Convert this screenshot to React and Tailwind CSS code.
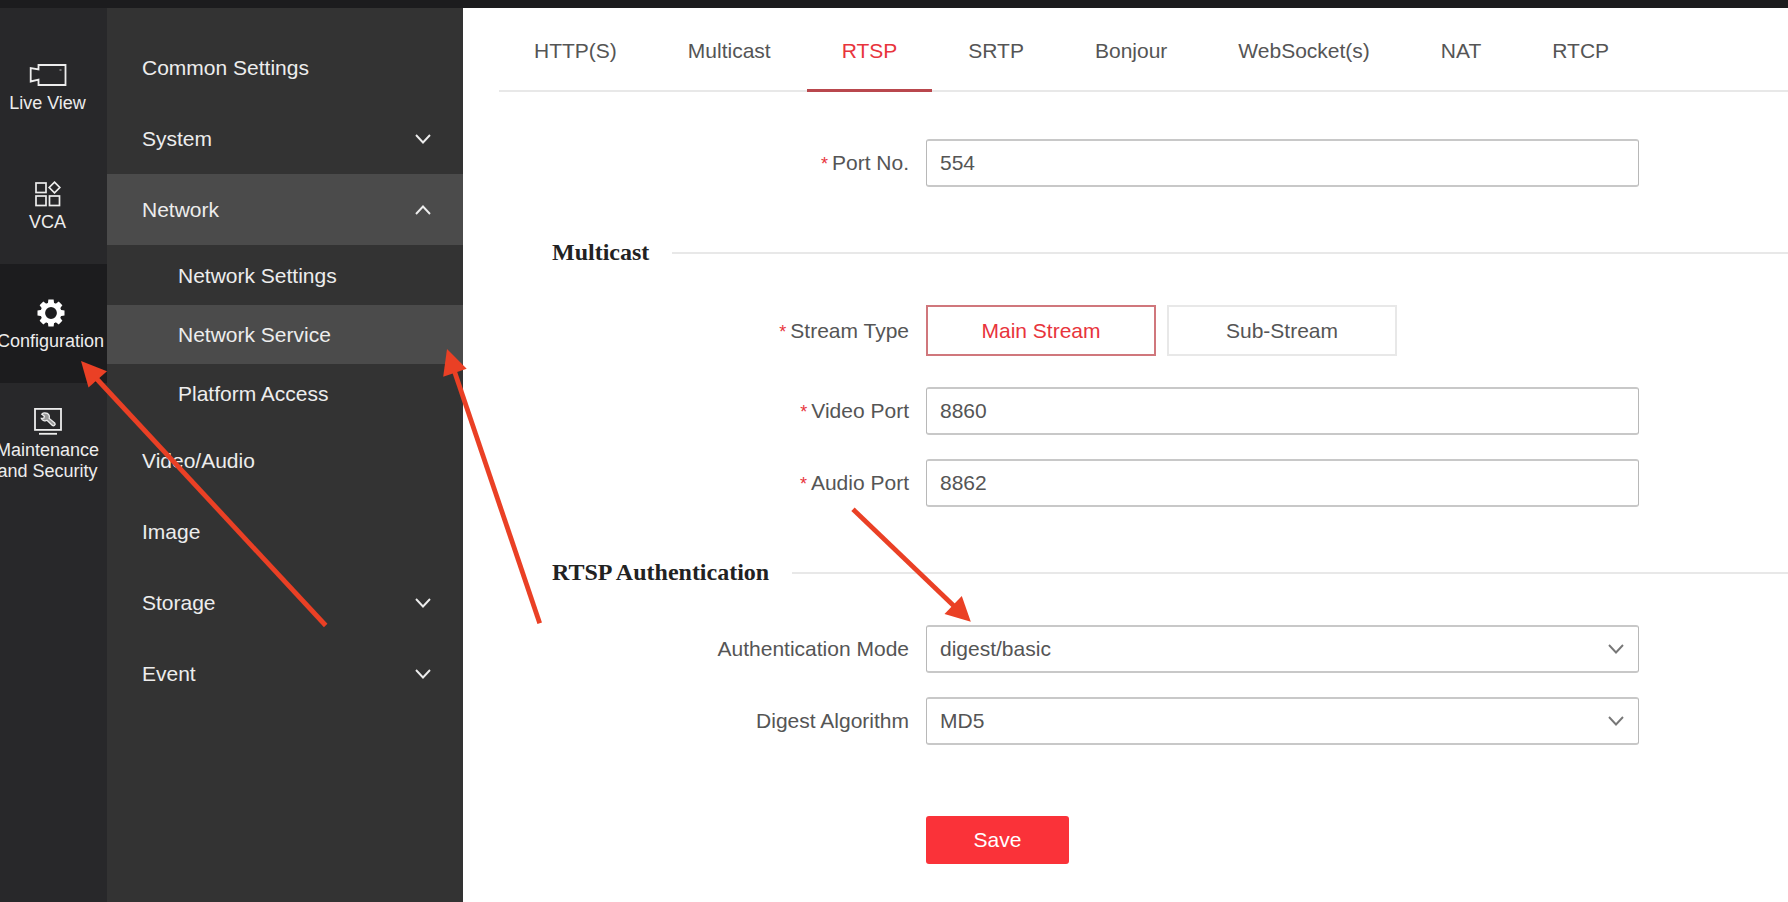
import { useState } from "react";

function CameraIcon() {
  return (
    <svg width="38" height="28" viewBox="0 0 38 28" fill="none" stroke="#ededed" strokeWidth="1.8" aria-hidden="true">
      <path d="M9 9V4.500H36V24.500H9V19.200L1.200 21V7.500L9 9Z" transform="translate(0.500 -0.500)" />
      <path d="M30.500 9h2" stroke="#a8a8a8" strokeWidth="1.2" />
    </svg>
  );
}

function VcaIcon() {
  return (
    <svg width="28" height="28" viewBox="0 0 28 28" fill="none" stroke="#ededed" strokeWidth="1.7" aria-hidden="true">
      <rect x="2" y="3" width="10" height="9.5" />
      <path d="M20.500 2.200l5.300 5.300-5.300 5.300L15.200 7.500Z" />
      <rect x="2" y="16" width="10" height="9.5" />
      <rect x="15.500" y="16" width="10" height="9.5" />
    </svg>
  );
}

function GearIcon() {
  return (
    <svg width="28" height="28" viewBox="0 0 28 28" aria-hidden="true">
      <circle cx="14" cy="14" r="8.200" fill="none" stroke="#fff" strokeWidth="4.600" />
      <g fill="#fff">
        {[0, 45, 90, 135, 180, 225, 270, 315].map((a) => (
          <path key={a} d="M10.800 5L11.400 0.500H16.600L17.200 5Z" transform={`rotate(${a} 14 14)`} />
        ))}
      </g>
    </svg>
  );
}

function MaintenanceIcon() {
  return (
    <svg width="28" height="28" viewBox="0 0 28 28" fill="none" stroke="#ededed" strokeWidth="1.800" aria-hidden="true">
      <rect x="1" y="0.900" width="26" height="21" />
      <path d="M5 25.800h18" />
      <path
        d="M11.500 5a4 4 0 0 0-3.700 1.200l2.600 2-.6 2-2.400.2a4 4 0 0 0 5.600 1.900l5.200 5a1.700 1.700 0 0 0 2.500-2.300l-5.500-4.600a4 4 0 0 0-3.700-5.400Z"
        fill="#9a9a9a"
        strokeWidth="1.300"
      />
    </svg>
  );
}

function Chevron({ up = false, className = "" }) {
  return (
    <svg
      className={className}
      width="18"
      height="12"
      viewBox="0 0 18 12"
      fill="none"
      stroke="currentColor"
      strokeWidth="1.900"
      aria-hidden="true"
    >
      <path d={up ? "M2 10l7-7.500 7 7.500" : "M2 2l7 7.500L16 2"} />
    </svg>
  );
}

const railItems = [
  { label: "Live View", Icon: CameraIcon },
  { label: "VCA", Icon: VcaIcon },
  { label: "Configuration", Icon: GearIcon, active: true },
  { label: "Maintenance and Security", Icon: MaintenanceIcon },
];

const menu = [
  { label: "Common Settings" },
  { label: "System", expandable: true },
  {
    label: "Network",
    expandable: true,
    open: true,
    children: ["Network Settings", "Network Service", "Platform Access"],
  },
  { label: "Video/Audio" },
  { label: "Image" },
  { label: "Storage", expandable: true },
  { label: "Event", expandable: true },
];

const tabs = ["HTTP(S)", "Multicast", "RTSP", "SRTP", "Bonjour", "WebSocket(s)", "NAT", "RTCP"];

function Rail() {
  return (
    <nav className="w-[107px] shrink-0 overflow-hidden bg-[#28282a] pt-[18px]" aria-label="Main">
      {railItems.map(({ label, Icon, active }) => (
        <a
          key={label}
          href="#"
          className={`flex h-[119px] flex-col items-center justify-center gap-1 pt-1 text-center text-[18px] leading-[21px] text-[#ededed] ${
            active ? "bg-[#1c1c1e] pr-1.5" : "pr-3"
          }`}
        >
          <Icon />
          <span className="w-[110px] shrink-0">{label}</span>
        </a>
      ))}
    </nav>
  );
}

function Sidebar() {
  return (
    <nav className="w-[356px] shrink-0 bg-[#333333] pt-6 text-[21px] text-[#ededed]" aria-label="Configuration">
      <ul>
        {menu.map((item) => (
          <li key={item.label}>
            <button
              type="button"
              aria-expanded={item.expandable ? Boolean(item.open) : undefined}
              className={`flex h-[71px] w-full items-center justify-between pr-[31px] pl-[35px] text-left ${
                item.open ? "bg-[#4b4b4b]" : ""
              }`}
            >
              {item.label}
              {item.expandable && <Chevron up={item.open} />}
            </button>
            {item.children && (
              <ul className="pt-px pb-0.5">
                {item.children.map((child) => (
                  <li key={child}>
                    <a
                      href="#"
                      className={`flex h-[59px] items-center pl-[71px] ${
                        child === "Network Service" ? "bg-[#4b4b4b]" : ""
                      }`}
                    >
                      {child}
                    </a>
                  </li>
                ))}
              </ul>
            )}
          </li>
        ))}
      </ul>
    </nav>
  );
}

const labelClass = "w-[410px] shrink-0 text-right";
const controlClass =
  "h-12 w-full rounded-[3px] border-x border-y-2 border-x-[#b8b8b8] border-y-[#c8c8c8] bg-white px-[13px] text-[#555555] outline-none";

function Required() {
  return <span className="mr-1 text-[18px] text-[#e8343c]">*</span>;
}

function TextRow({ id, label, value }) {
  return (
    <div className="flex items-center gap-[17px]">
      <label htmlFor={id} className={labelClass}>
        <Required />
        {label}
      </label>
      <div className="max-w-[713px] flex-1">
        <input id={id} type="text" defaultValue={value} className={controlClass} />
      </div>
    </div>
  );
}

function SelectRow({ id, label, options }) {
  return (
    <div className="flex items-center gap-[17px]">
      <label htmlFor={id} className={labelClass}>
        {label}
      </label>
      <div className="relative max-w-[713px] flex-1">
        <select id={id} className={`${controlClass} appearance-none`}>
          {options.map((o) => (
            <option key={o}>{o}</option>
          ))}
        </select>
        <Chevron className="pointer-events-none absolute top-[18px] right-[14px] text-[#777777]" />
      </div>
    </div>
  );
}

function SectionHeading({ children }) {
  return (
    <div className="mt-[50px] mb-9 flex h-8 items-center gap-[23px] pl-[53px]">
      <h2 className="pb-[3px] font-['Liberation_Serif',serif] text-[24px] leading-7 font-bold text-[#222222]">
        {children}
      </h2>
      <div className="h-0.5 flex-1 bg-[#e8e8e8]" />
    </div>
  );
}

function StreamType() {
  const [stream, setStream] = useState("Main Stream");
  return (
    <div className="mb-[31px] flex items-center gap-[17px]" role="group" aria-labelledby="stream-type">
      <span id="stream-type" className={labelClass}>
        <Required />
        Stream Type
      </span>
      <div className="flex gap-[11px]">
        {["Main Stream", "Sub-Stream"].map((s) => (
          <button
            key={s}
            type="button"
            aria-pressed={s === stream}
            onClick={() => setStream(s)}
            className={`h-[51px] w-[230px] border-2 ${
              s === stream ? "border-[#d0777c] text-[#e8343c]" : "border-[#e8e8e8]"
            }`}
          >
            {s}
          </button>
        ))}
      </div>
    </div>
  );
}

function Annotations() {
  return (
    <svg
      className="pointer-events-none absolute top-0 left-0"
      width="1000"
      height="640"
      viewBox="0 0 1000 640"
      fill="#ea4025"
      stroke="#ea4025"
      aria-hidden="true"
    >
      <g strokeWidth="4.800">
        <path d="M325.700 625.500L95 377" />
        <path d="M539.700 623.300L454 370" />
        <path d="M853 509.300L955 607" />
      </g>
      <g stroke="none">
        <path d="M81 361L107 371.200L88.500 387.500Z" />
        <path d="M447 349L466.700 368.800L443.200 376.700Z" />
        <path d="M970.800 621.800L961.800 596L944.500 614Z" />
      </g>
    </svg>
  );
}

export default function App() {
  return (
    <div className="relative flex min-h-screen flex-col overflow-x-hidden bg-white font-['Liberation_Sans',Arial,sans-serif] text-[21px] text-[#555555]">
      <header className="h-2 bg-[#1c1c1e]" />
      <div className="flex flex-1">
        <Rail />
        <Sidebar />
        <main className="min-w-0 flex-1 pl-9">
          <nav className="flex h-[84px] gap-px border-b-2 border-[#e8e8e8]" aria-label="Network service">
            {tabs.map((t) => (
              <a
                key={t}
                href="#"
                aria-current={t === "RTSP" ? "page" : undefined}
                className={`-mb-0.5 flex items-center border-b-3 px-[35px] pt-1 ${
                  t === "RTSP" ? "border-[#b9474d] text-[#e8343c]" : "border-transparent"
                }`}
              >
                {t}
              </a>
            ))}
          </nav>
          <form className="pt-[47px]" onSubmit={(e) => e.preventDefault()}>
            <TextRow id="port" label="Port No." value="554" />
            <SectionHeading>Multicast</SectionHeading>
            <StreamType />
            <div className="flex flex-col gap-6">
              <TextRow id="video-port" label="Video Port" value="8860" />
              <TextRow id="audio-port" label="Audio Port" value="8862" />
            </div>
            <SectionHeading>RTSP Authentication</SectionHeading>
            <div className="flex flex-col gap-6">
              <SelectRow id="auth-mode" label="Authentication Mode" options={["digest/basic", "digest"]} />
              <SelectRow id="digest-algorithm" label="Digest Algorithm" options={["MD5", "SHA256", "MD5/SHA256"]} />
            </div>
            <div className="mt-[71px] pl-[427px]">
              <button type="submit" className="h-12 w-[143px] rounded-[3px] bg-[#fa3239] text-white">
                Save
              </button>
            </div>
          </form>
        </main>
      </div>
      <Annotations />
    </div>
  );
}
